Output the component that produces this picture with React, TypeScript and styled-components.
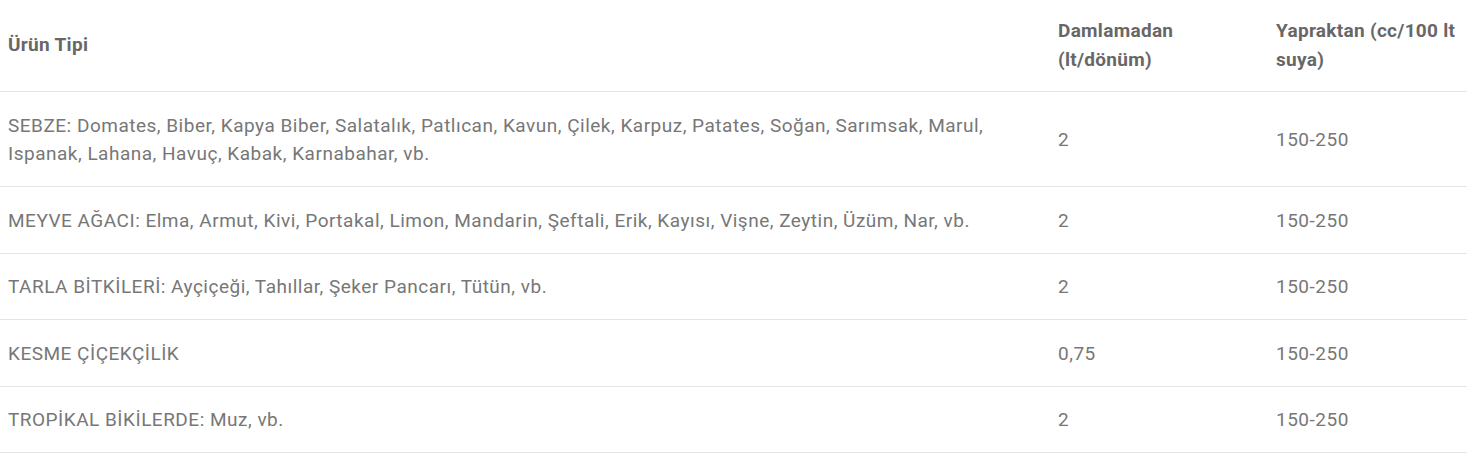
import React from "react";
import styled, { createGlobalStyle } from "styled-components";

const Global = createGlobalStyle`
  html, body { margin: 0; padding: 0; background: #fff; }
  body { font-family: Roboto, "Liberation Sans", sans-serif; }
`;

const Table = styled.table`
  width: 1467px;
  border-collapse: collapse;
  table-layout: fixed;
  font-family: Roboto, "Liberation Sans", sans-serif;
  font-size: 19px;
`;

const Col = styled.col<{ $w: number }>`
  width: ${(p) => p.$w}px;
`;

const HeadCell = styled.th`
  text-align: left;
  vertical-align: middle;
  padding: 17px 6px 17px 8px;
  line-height: 28.5px;
  font-weight: 700;
  letter-spacing: 0.3px;
  color: #676767;
  border-bottom: 1px solid #e4e4e4;
`;

const Cell = styled.td`
  text-align: left;
  vertical-align: middle;
  padding: 19.5px 6px 17.5px 8px;
  line-height: 28.5px;
  font-weight: 400;
  letter-spacing: 0.5px;
  color: #777777;
  border-bottom: 1px solid #e4e4e4;
`;

const rows: [string, string, string][] = [
  [
    "SEBZE: Domates, Biber, Kapya Biber, Salatalık, Patlıcan, Kavun, Çilek, Karpuz, Patates, Soğan, Sarımsak, Marul, Ispanak, Lahana, Havuç, Kabak, Karnabahar, vb.",
    "2",
    "150-250",
  ],
  [
    "MEYVE AĞACI: Elma, Armut, Kivi, Portakal, Limon, Mandarin, Şeftali, Erik, Kayısı, Vişne, Zeytin, Üzüm, Nar, vb.",
    "2",
    "150-250",
  ],
  ["TARLA BİTKİLERİ: Ayçiçeği, Tahıllar, Şeker Pancarı, Tütün, vb.", "2", "150-250"],
  ["KESME ÇİÇEKÇİLİK", "0,75", "150-250"],
  ["TROPİKAL BİKİLERDE: Muz, vb.", "2", "150-250"],
];

export default function App() {
  return (
    <>
      <Global />
      <Table>
        <colgroup>
          <Col $w={1050} />
          <Col $w={218} />
          <Col $w={199} />
        </colgroup>
        <thead>
          <tr>
            <HeadCell>Ürün Tipi</HeadCell>
            <HeadCell>Damlamadan (lt/dönüm)</HeadCell>
            <HeadCell>Yapraktan (cc/100 lt suya)</HeadCell>
          </tr>
        </thead>
        <tbody>
          {rows.map((r, i) => (
            <tr key={i}>
              <Cell>{r[0]}</Cell>
              <Cell>{r[1]}</Cell>
              <Cell>{r[2]}</Cell>
            </tr>
          ))}
        </tbody>
      </Table>
    </>
  );
}
